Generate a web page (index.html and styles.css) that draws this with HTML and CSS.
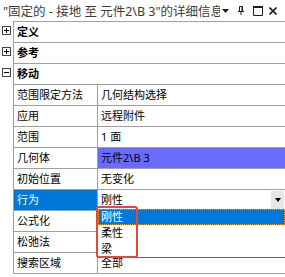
FILE: index.html
```html
<!DOCTYPE html>
<html lang="zh-CN">
<head>
  <meta charset="UTF-8" />
  <title>详细信息</title>
  <link rel="stylesheet" href="styles.css">
</head>
<body>

  <div class="title">
    <span class="title-text">"固定的 - 接地 至 元件2\B 3"的详细信息</span>
    <svg class="ic caret" width="7" height="4" viewBox="0 0 7 4"><path d="M0 0h7L3.5 4z" fill="#1e1e1e"/></svg>
    <svg class="ic pin" width="6" height="9" viewBox="0 0 6 9"><path d="M1.5 0.5h3v4.5M1.5 0.5v4.5M0 5.5h6M3 6v3" stroke="#1e1e1e" fill="none"/><path d="M4 0.5v4.5" stroke="#1e1e1e"/></svg>
    <svg class="ic max" width="10" height="10" viewBox="0 0 10 10"><path d="M0.5 1h9v8.5h-9z" stroke="#1e1e1e" fill="none"/><path d="M0 1h10" stroke="#1e1e1e" stroke-width="2"/></svg>
    <svg class="ic close" width="8" height="8" viewBox="0 0 8 8"><path d="M0.5 0.5l7 7M7.5 0.5l-7 7" stroke="#1e1e1e" stroke-width="1.6"/></svg>
  </div>

  <div class="grid">
    <div class="row">
      <div class="gut"><svg width="9" height="9" viewBox="0 0 9 9"><rect x="0.5" y="0.5" width="8" height="8" fill="#fff" stroke="#444"/><path d="M2 4.5h5M4.5 2v5" stroke="#000"/></svg></div>
      <div class="cells cat">定义</div>
    </div>
    <div class="row">
      <div class="gut"><svg width="9" height="9" viewBox="0 0 9 9"><rect x="0.5" y="0.5" width="8" height="8" fill="#fff" stroke="#444"/><path d="M2 4.5h5M4.5 2v5" stroke="#000"/></svg></div>
      <div class="cells cat">参考</div>
    </div>
    <div class="row">
      <div class="gut"><svg width="9" height="9" viewBox="0 0 9 9"><rect x="0.5" y="0.5" width="8" height="8" fill="#fff" stroke="#444"/><path d="M2 4.5h5" stroke="#000"/></svg></div>
      <div class="cells cat">移动</div>
    </div>
    <div class="row">
      <div class="gut"></div>
      <div class="cells"><div class="name">范围限定方法</div><div class="val">几何结构选择</div></div>
    </div>
    <div class="row">
      <div class="gut"></div>
      <div class="cells"><div class="name">应用</div><div class="val">远程附件</div></div>
    </div>
    <div class="row">
      <div class="gut"></div>
      <div class="cells"><div class="name">范围</div><div class="val">1 面</div></div>
    </div>
    <div class="row">
      <div class="gut"></div>
      <div class="cells"><div class="name">几何体</div><div class="val geo">元件2\B 3</div></div>
    </div>
    <div class="row">
      <div class="gut"></div>
      <div class="cells"><div class="name">初始位置</div><div class="val">无变化</div></div>
    </div>
    <div class="row">
      <div class="gut"></div>
      <div class="cells"><div class="name sel">行为</div><div class="val combo">刚性<span class="drop-btn"></span></div></div>
    </div>
    <div class="row">
      <div class="gut"></div>
      <div class="cells"><div class="name">公式化</div><div class="val"></div></div>
    </div>
    <div class="row">
      <div class="gut"></div>
      <div class="cells"><div class="name">松弛法</div><div class="val"></div></div>
    </div>
    <div class="row">
      <div class="gut"></div>
      <div class="cells"><div class="name">搜索区域</div><div class="val">全部</div></div>
    </div>
  </div>

  <div class="droplist">
    <div class="opt active">刚性</div>
    <div class="opt">柔性</div>
    <div class="opt">梁</div>
  </div>

  <div class="mark"></div>

</body>
</html>
```

FILE: styles.css
```css
body {
  margin: 0;
  width: 285px;
  height: 277px;
  overflow: hidden;
  position: relative;
  background: #fff;
  font-family: "Noto Sans", "Noto Sans CJK SC", sans-serif;
  font-size: 11px;
  color: #000;
}

.title {
  height: 21px;
  display: flex;
  align-items: center;
  padding: 0 8px 0 3px;
  font-size: 12.5px;
  color: #3c3c3c;
}

.title-text {
  flex: 1;
  white-space: nowrap;
  overflow: hidden;
}

.ic { display: block; flex: none; }
.caret { margin-left: 2px; }
.pin { margin-left: 9px; }
.max { margin-left: 9px; }
.close { margin-left: 6px; }

.row {
  display: flex;
}

.gut {
  width: 13px;
  flex: none;
  padding: 4px 0 0 2px;
  box-sizing: border-box;
}

.gut svg { display: block; }

.cells {
  flex: 1;
  display: flex;
  height: 20px;
  line-height: 20px;
  border-left: 1px solid #a0a0a0;
  border-bottom: 1px solid #a0a0a0;
}

.row:first-child .cells { border-top: 1px solid #a0a0a0; }
.row:first-child .gut { padding-top: 5px; }

.cat {
  font-weight: bold;
  padding-left: 3px;
}

.name {
  width: 84px;
  flex: none;
  padding-left: 3px;
  box-sizing: border-box;
  border-right: 1px solid #a0a0a0;
  white-space: nowrap;
}

.name.sel {
  background: #0078d7;
  color: #fff;
}

.val {
  flex: 1;
  padding-left: 3px;
  white-space: nowrap;
}

.val.geo { background: #6a6aff; }

.combo {
  display: flex;
  justify-content: space-between;
  align-items: center;
}

.drop-btn {
  width: 13px;
  height: 18px;
  margin-right: 1px;
  background: #e6e6e6;
  display: flex;
  align-items: center;
  justify-content: center;
}

.drop-btn::after {
  content: '';
  border-left: 3px solid transparent;
  border-right: 3px solid transparent;
  border-top: 4px solid #000;
}

.droplist {
  position: absolute;
  top: 209px;
  left: 98px;
  right: 0;
  background: #fff;
  border-bottom: 1px solid #646464;
}

.opt {
  height: 16px;
  line-height: 16px;
  padding-left: 3px;
}

.opt.active {
  background: #0078d7;
  color: #fff;
  outline: 1px dotted #f29a2e;
  outline-offset: -1px;
}

.mark {
  position: absolute;
  left: 96px;
  top: 206px;
  width: 42px;
  height: 52px;
  box-sizing: border-box;
  border: 2px solid #e8463c;
  border-radius: 3px;
}
```
